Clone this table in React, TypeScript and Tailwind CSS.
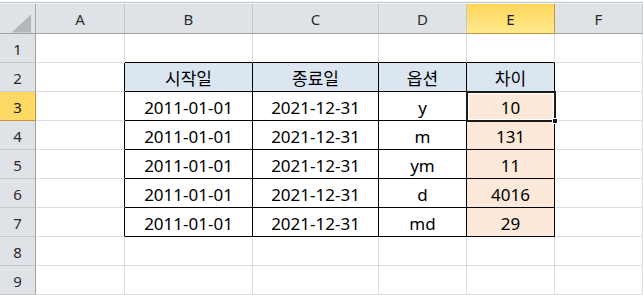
import clsx from 'clsx'

// Sheet geometry: row-header column + columns A..F, header row + rows 1..9
const COLS = ['A', 'B', 'C', 'D', 'E', 'F']

// Cell contents keyed by row number, index 0 = column A
const DATA: Record<number, string[]> = {
  2: ['', '시작일', '종료일', '옵션', '차이', ''],
  3: ['', '2011-01-01', '2021-12-31', 'y', '10', ''],
  4: ['', '2011-01-01', '2021-12-31', 'm', '131', ''],
  5: ['', '2011-01-01', '2021-12-31', 'ym', '11', ''],
  6: ['', '2011-01-01', '2021-12-31', 'd', '4016', ''],
  7: ['', '2011-01-01', '2021-12-31', 'md', '29', ''],
}

const ACTIVE_ROW = 3
const ACTIVE_COL = 4 // E

function inTable(r: number, c: number) {
  return r >= 2 && r <= 7 && c >= 1 && c <= 4
}

function Cell({ r, c }: { r: number; c: number }) {
  const text = DATA[r]?.[c] ?? ''
  // black edges around B2:E7, light gridlines elsewhere
  const rightBlack = r >= 2 && r <= 7 && c >= 0 && c <= 4
  const bottomBlack = c >= 1 && c <= 4 && r >= 1 && r <= 7
  const isHead = r === 2 && inTable(r, c)
  const isDiff = c === 4 && r >= 3 && r <= 7

  return (
    <div
      className={clsx(
        'h-[29px] border-r border-b flex items-center justify-center pt-[3px] text-[17px] text-black',
        rightBlack ? 'border-r-black' : 'border-r-[#dadcdd]',
        bottomBlack ? 'border-b-black' : 'border-b-[#dadcdd]',
        isHead && 'bg-[#dce6f1]',
        isDiff && 'bg-[#fde9d9]',
        !isHead && !isDiff && 'bg-white'
      )}
    >
      {text}
    </div>
  )
}

function CornerCell() {
  return (
    <div className="h-[30px] border-r border-b border-r-[#a5a9ae] border-b-[#9ea3a9] bg-[#dfe3e8] flex items-center justify-center">
      <svg width="36" height="30" viewBox="0 0 36 30">
        <polygon points="32,10 32,29 12,29" fill="#b3b7bc" />
      </svg>
    </div>
  )
}

function ColHeader({ label, active }: { label: string; active: boolean }) {
  return (
    <div
      className={clsx(
        'h-[30px] border-b flex items-center justify-center pt-[1px] text-[15px]',
        active
          ? 'bg-gradient-to-b from-[#ffd558] to-[#ffea8f] border-r border-r-[#c9923a] border-b-[#c9923a] text-[#1c1c1c]'
          : 'bg-[#dfe3e8] border-r border-r-[#c4c8cd] border-b-[#9ea3a9] text-[#2b2b2b]'
      )}
    >
      {label}
    </div>
  )
}

function RowHeader({ n, active }: { n: number; active: boolean }) {
  return (
    <div
      className={clsx(
        'h-[29px] border-r border-b flex items-center justify-center pt-[2px] text-[15px]',
        active
          ? 'bg-[#ffd966] border-r-[#c9923a] border-b-[#c9923a] text-[#1c1c1c]'
          : 'bg-[#dfe3e8] border-r-[#9ea3a9] border-b-[#c4c8cd] text-[#2b2b2b]'
      )}
    >
      {n}
    </div>
  )
}

export default function App() {
  const rows = [1, 2, 3, 4, 5, 6, 7, 8, 9]

  return (
    <div className="w-[643px] h-[295px] overflow-hidden bg-white font-['Noto_Sans','Noto_Sans_CJK_KR',sans-serif] select-none">
      {/* strip above the column headers */}
      <div className="h-[4px] bg-[#f2f3f5] border-t border-t-[#ffffff] relative">
        <div className="absolute left-0 right-0 top-[1px] h-[1px] bg-[#c3cad3]" />
      </div>

      <div className="relative grid grid-cols-[36px_89px_128px_126px_88px_88px_88px]">
        <CornerCell />
        {COLS.map((col, i) => (
          <ColHeader key={col} label={col} active={i === ACTIVE_COL} />
        ))}

        {rows.map((r) => (
          <div key={r} className="contents">
            <RowHeader n={r} active={r === ACTIVE_ROW} />
            {COLS.map((_, c) => (
              <Cell key={c} r={r} c={c} />
            ))}
          </div>
        ))}

        {/* active cell outline on E3 with fill handle */}
        <div className="absolute left-[466px] top-[87px] w-[90px] h-[31px] border-2 border-[#1a1a1a] pointer-events-none">
          <div className="absolute inset-0 border border-white" />
          <div className="absolute -right-[4px] -bottom-[4px] w-[6px] h-[6px] bg-[#1a1a1a] border border-white" />
        </div>
      </div>
    </div>
  )
}
